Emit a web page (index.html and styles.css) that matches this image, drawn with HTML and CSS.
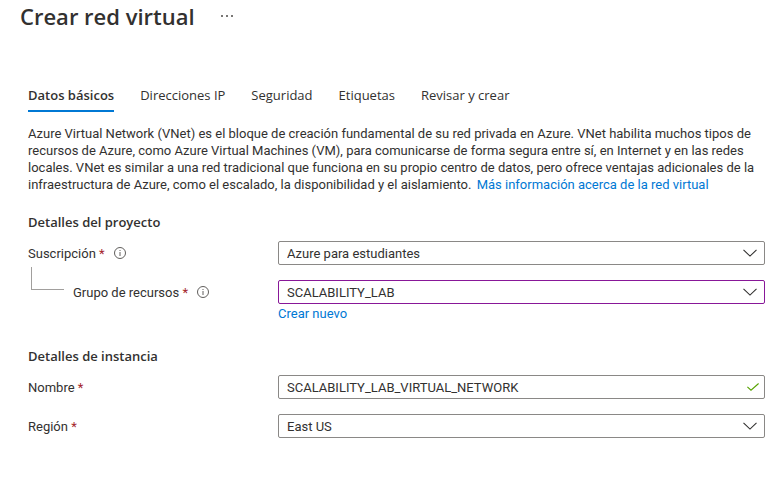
FILE: index.html
```html
<!DOCTYPE html>
<html lang="es">
<head>
<meta charset="utf-8">
<meta name="viewport" content="width=device-width, initial-scale=1">
<title>Crear red virtual</title>
<link rel="stylesheet" href="styles.css">
</head>
<body>
<header class="header">
  <h1 class="title">Crear red virtual</h1>
  <button class="more" type="button" aria-label="Más opciones">
    <svg width="12" height="2" viewBox="0 0 12 2" fill="currentColor"><path d="M0 0h2v2H0zM5 0h2v2H5zM10 0h2v2h-2z"/></svg>
  </button>
</header>
<main class="content">
  <nav class="tabs">
    <a class="tab tab-active" href="#basics" aria-current="page">Datos básicos</a>
    <a class="tab" href="#ip">Direcciones IP</a>
    <a class="tab" href="#security">Seguridad</a>
    <a class="tab" href="#tags">Etiquetas</a>
    <a class="tab" href="#review">Revisar y crear</a>
  </nav>
  <p class="intro">Azure Virtual Network (VNet) es el bloque de creación fundamental de su red privada en Azure. VNet habilita muchos tipos de<br>recursos de Azure, como Azure Virtual Machines (VM), para comunicarse de forma segura entre sí, en Internet y en las redes<br>locales. VNet es similar a una red tradicional que funciona en su propio centro de datos, pero ofrece ventajas adicionales de la<br>infraestructura de Azure, como el escalado, la disponibilidad y el aislamiento. <a class="link intro-link" href="#more">Más información acerca de la red virtual</a></p>
  <form>
    <section class="section project">
      <h2 class="heading">Detalles del proyecto</h2>
      <div class="row">
        <div class="label-cell">
          <label for="subscription">Suscripción <span class="required">*</span></label>
          <svg class="info" width="12" height="12" viewBox="0 0 12 12" fill="none" stroke="currentColor"><circle cx="6" cy="6" r="5.5"/><path d="M6 5v4M6 3v1"/></svg>
        </div>
        <div class="control">
          <select class="field" id="subscription"><option>Azure para estudiantes</option></select>
          <svg class="chevron" width="14" height="8" viewBox="0 0 14 8" fill="none" stroke="currentColor" stroke-width="1.1"><path d="M.5.8 7 7.1 13.500.8"/></svg>
        </div>
      </div>
      <div class="row">
        <div class="label-cell">
          <span class="branch"></span>
          <label for="group">Grupo de recursos <span class="required">*</span></label>
          <svg class="info" width="12" height="12" viewBox="0 0 12 12" fill="none" stroke="currentColor"><circle cx="6" cy="6" r="5.5"/><path d="M6 5v4M6 3v1"/></svg>
        </div>
        <div class="control">
          <select class="field field-changed" id="group"><option>SCALABILITY_LAB</option></select>
          <svg class="chevron" width="14" height="8" viewBox="0 0 14 8" fill="none" stroke="currentColor" stroke-width="1.1"><path d="M.5.8 7 7.1 13.500.8"/></svg>
        </div>
        <a class="link create-link" href="#new">Crear nuevo</a>
      </div>
    </section>
    <section class="section">
      <h2 class="heading">Detalles de instancia</h2>
      <div class="row">
        <div class="label-cell"><label for="name">Nombre <span class="required">*</span></label></div>
        <div class="control">
          <input class="field" id="name" type="text" value="SCALABILITY_LAB_VIRTUAL_NETWORK">
          <svg class="check" width="12" height="8" viewBox="0 0 12 8" fill="none" stroke="currentColor" stroke-width="1.1"><path d="M.4 3.800 4 7.200 11.600.5"/></svg>
        </div>
      </div>
      <div class="row">
        <div class="label-cell"><label for="region">Región <span class="required">*</span></label></div>
        <div class="control">
          <select class="field" id="region"><option>East US</option></select>
          <svg class="chevron" width="14" height="8" viewBox="0 0 14 8" fill="none" stroke="currentColor" stroke-width="1.1"><path d="M.5.8 7 7.1 13.500.8"/></svg>
        </div>
      </div>
    </section>
  </form>
</main>
</body>
</html>
```

FILE: styles.css
```css
* { box-sizing: border-box; }

body {
  margin: 0;
  background: #fff;
  color: #323130;
  font-family: "Segoe UI", Roboto, sans-serif;
  font-size: 13px;
  line-height: 17px;
}

.title,
.tabs,
.heading {
  font-family: "Segoe UI", "Open Sans", "Noto Sans", sans-serif;
}

.header {
  display: flex;
  align-items: center;
  gap: 24px;
  height: 32px;
  padding-left: 20px;
}

.title {
  margin: 0;
  font-size: 22px;
  font-weight: 600;
  line-height: 30px;
}

.more {
  display: flex;
  padding: 2px;
  border: 0;
  background: none;
  color: #797775;
}

.content { padding: 52px 19px 32px 28px; }

.tabs {
  display: flex;
  gap: 26px;
}

.tab {
  height: 28px;
  padding-top: 3px;
  color: inherit;
  text-decoration: none;
  white-space: nowrap;
}

.tab-active {
  border-bottom: 2px solid #0078d4;
  font-weight: 600;
}

.intro {
  margin: 13px 0 20px;
  white-space: nowrap;
}

.link {
  color: #0078d4;
  text-decoration: none;
}

.intro-link { margin-left: 2px; }

.section { margin-bottom: 25px; }

.heading {
  margin: 0 0 10px;
  font-size: 13px;
  font-weight: 600;
  line-height: 18px;
}

.row {
  display: grid;
  grid-template-columns: 250px 1fr;
}

.row + .row { margin-top: 15px; }

.label-cell {
  display: flex;
  align-items: center;
  gap: 9px;
  height: 24px;
}

.required { color: #a4262c; }

.info { color: #605e5c; }

.branch {
  align-self: flex-start;
  width: 33px;
  height: 23px;
  margin: -13px 0 0 3px;
  border: solid #a19f9d;
  border-width: 0 0 1px 1px;
}

.control {
  display: grid;
  align-items: center;
}

.control > * { grid-area: 1 / 1; }

.field {
  width: 100%;
  height: 24px;
  margin: 0;
  padding: 0 32px 0 8px;
  border: 1px solid #8a8886;
  border-radius: 2px;
  background: #fff;
  color: inherit;
  font: inherit;
  appearance: none;
}

.field-changed { border-color: #881798; }

.chevron,
.check {
  justify-self: end;
  margin-right: 8px;
  pointer-events: none;
}

.check {
  margin-right: 6px;
  color: #57a300;
}

.create-link {
  grid-column: 2;
  justify-self: start;
  margin-top: 1px;
}
```
